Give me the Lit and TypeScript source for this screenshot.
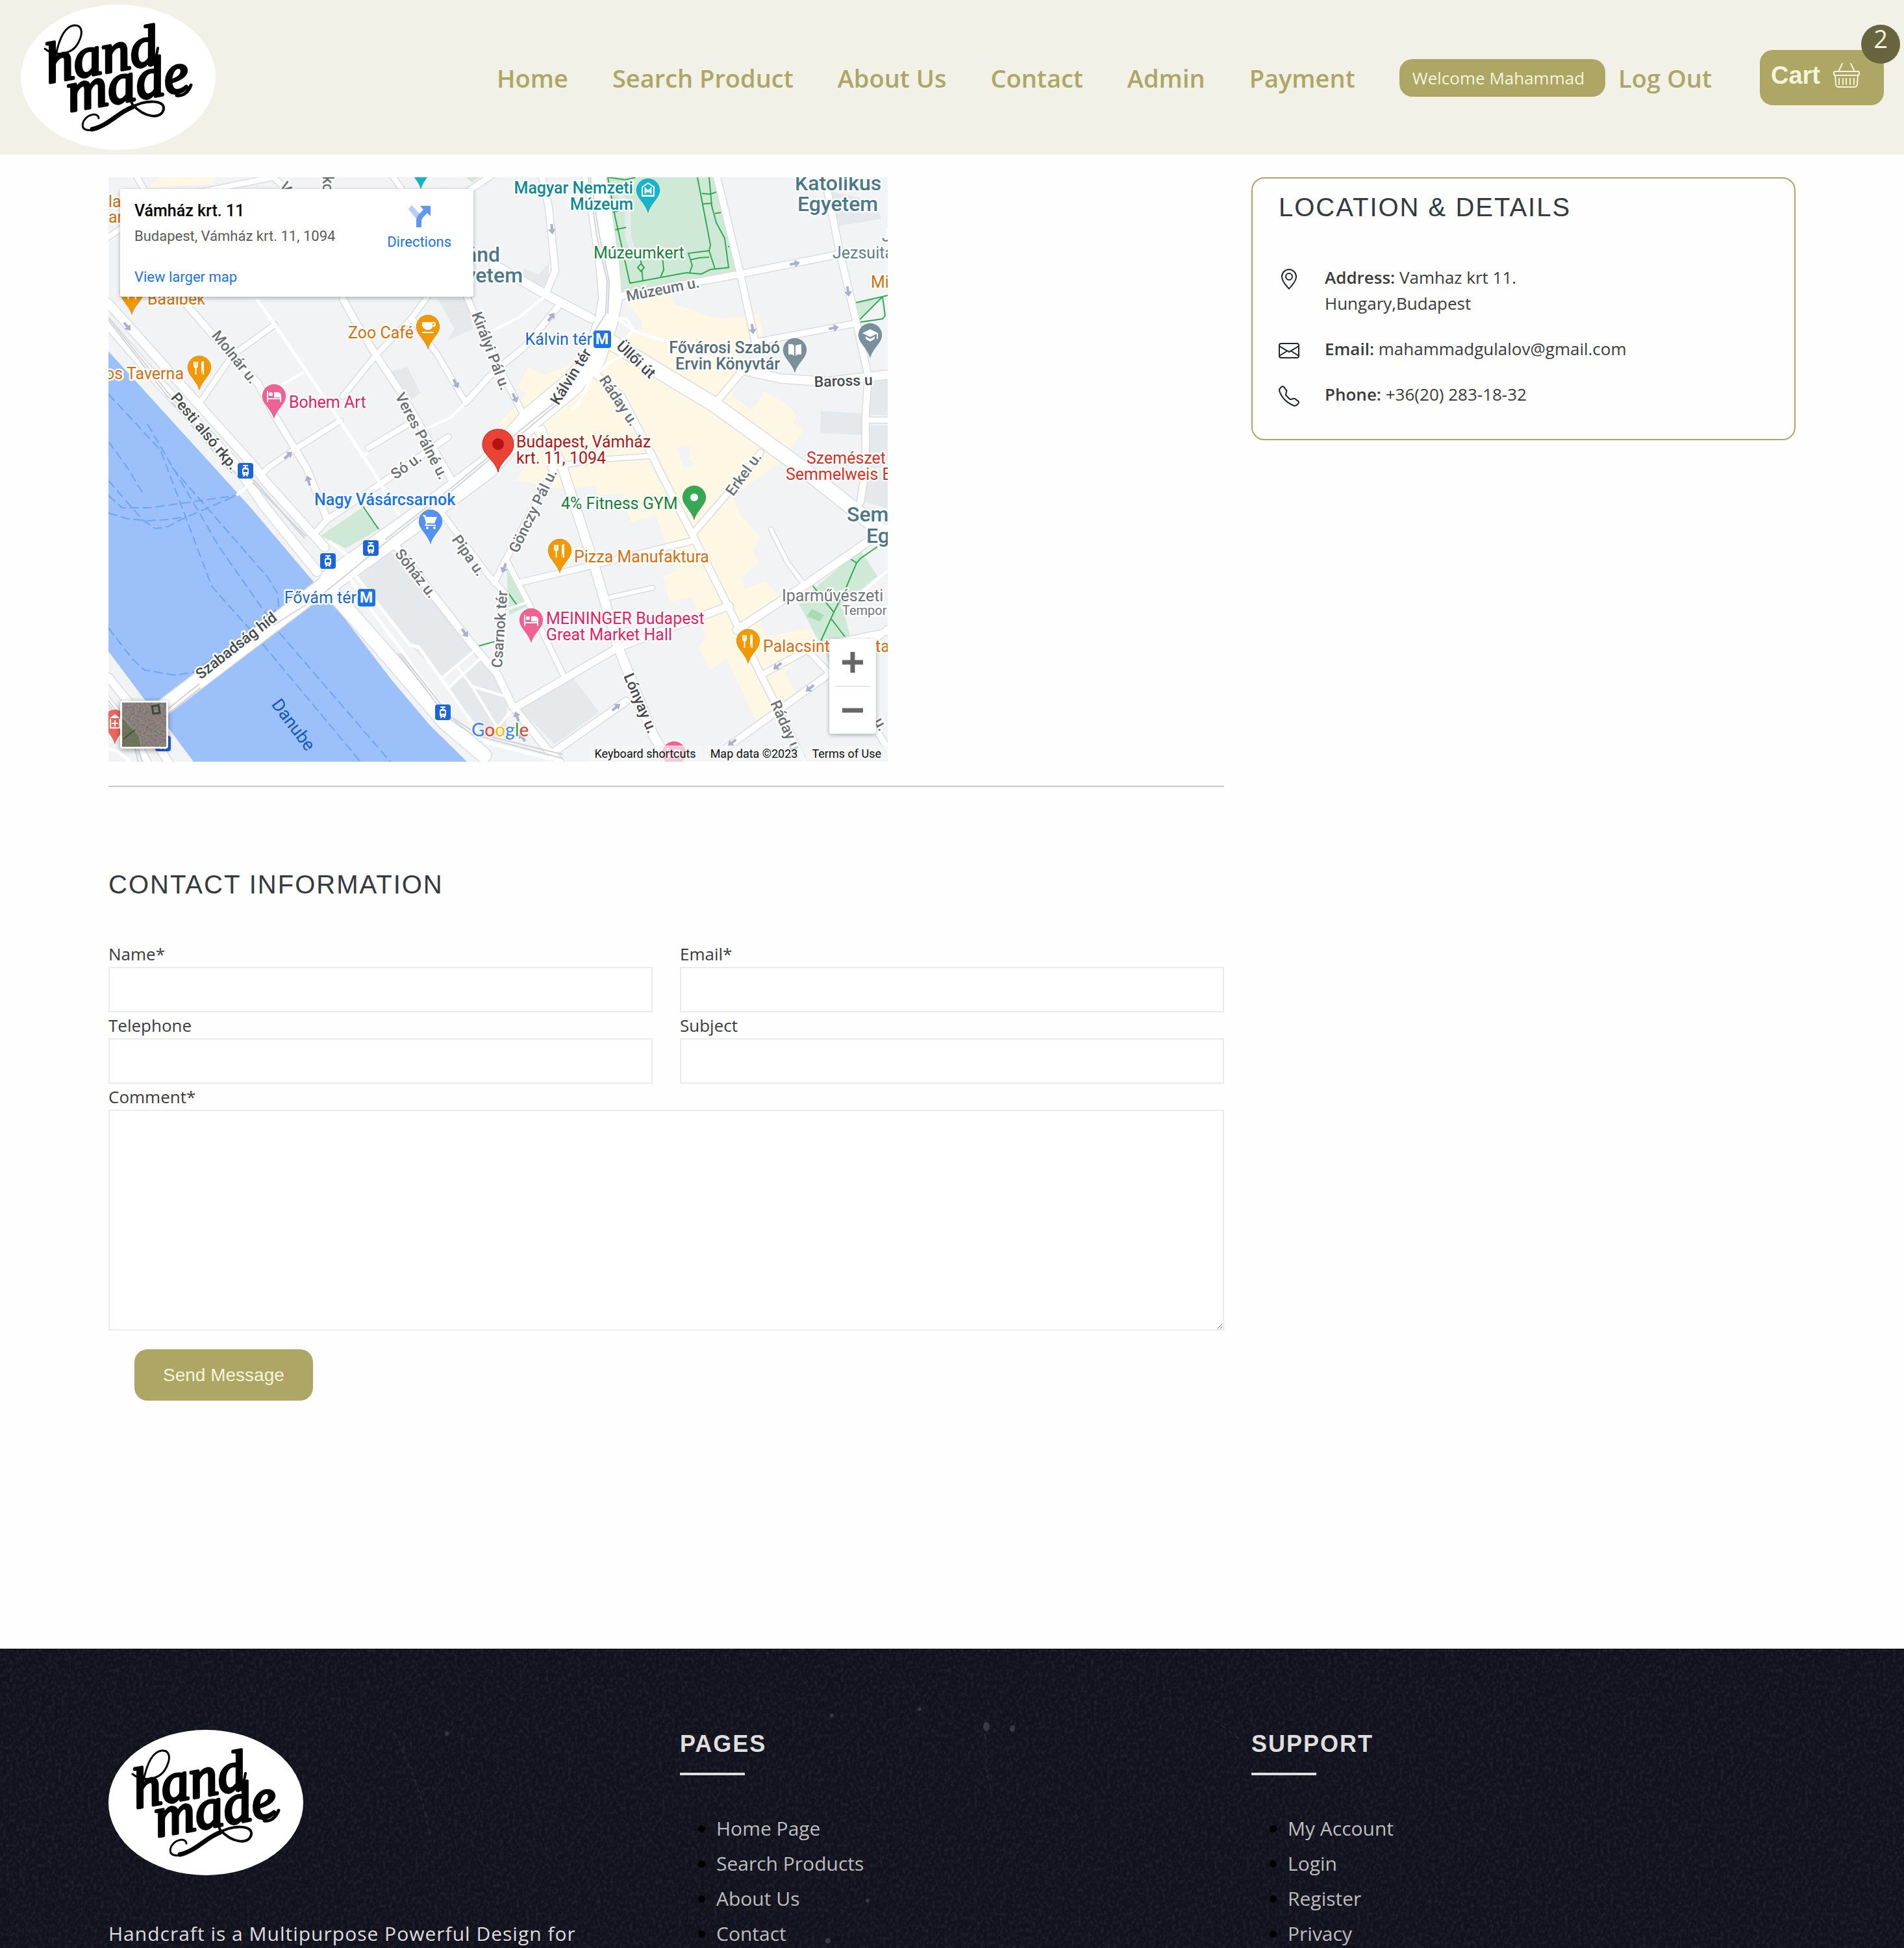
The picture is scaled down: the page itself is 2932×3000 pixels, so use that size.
import { LitElement, html, svg, css } from "lit";
import { customElement } from "lit/decorators.js";

type Label = [text: string, x: number, y: number, kind: string, angle?: number];
type Road = [points: string, width: number];

/* ---------- map data ---------- */

const ROADS: Road[] = [
  ["0,194 139,350 226,447 238,464 333,570", 13],
  ["0,227 72,310 191,437 220,477 238,504 321,607", 14],
  ["349,644 428,734 519,840 578,890", 22],
  ["0,770 40,820 92,900", 12],
  ["-6,800 26,840 60,900", 10],
  ["112,187 167,250 230,317 256,367 305,447 337,527", 10],
  ["256,227 191,274 139,350", 8],
  ["361,187 379,220 412,274 452,334 519,450 527,464", 10],
  ["491,184 467,217 412,274 361,337", 8],
  ["467,217 507,274 550,347", 8],
  ["467,377 400,417", 8],
  ["357,375 290,417 246,447 234,460", 8],
  ["321,545 337,527 412,477 523,400", 9],
  ["668,0 678,47 688,144 674,177", 10],
  ["692,200 640,262 593,300 550,347", 9],
  ["552,184 562,207 605,300 640,367", 9],
  ["440,564 503,647 566,727 598,764 622,814 675,880 695,900", 11],
  ["511,514 586,614 610,640 599,740 598,764", 8],
  ["668,387 687,447 613,587 594,624", 9],
  ["751,304 790,337 838,430 846,447 899,550 956,664 1005,767 1042,840 1070,900", 10],
  ["899,550 956,484 1004,424", 9],
  ["903,559 748,597 634,624", 9],
  ["956,660 785,724 626,817", 11],
  ["968,697 1079,624 1200,540", 12],
  ["613,590 646,654 699,764", 8],
  ["683,887 797,807", 11],
  ["1005,767 1083,724 1200,700", 9],
  ["1075,727 1111,764", 8],
  ["940,887 1111,764 1200,696", 10],
  ["1170,830 1200,880", 9],
  ["783,184 973,149 1123,119", 10],
  ["937,0 973,149 996,254", 10],
  ["1103,0 1127,119 1151,220 1170,307 1166,364 1166,447 1158,500", 10],
  ["996,254 1151,225", 9],
  ["977,297 1036,310 1107,315 1200,304", 13],
  ["977,297 933,350", 10],
  ["1174,374 1200,374", 8],
  ["1020,542 1046,594 1071,627", 6],
  ["838,632 773,647", 6],
  ["838,429 751,435 680,447", 7],
  ["44,0 58,24", 8],
  ["135,24 254,0", 8],
  ["254,0 280,24", 8],
  ["0,92 24,76", 8],
  ["550,24 598,-8", 9],
  ["436,-4 460,30", 8],
  ["593,134 676,182 743,217", 13],
  ["767,250 933,350 1067,447 1197,550", 22],
  ["664,392 696,437 748,597 785,724 838,857 862,900", 14],
  ["745,-13 755,37 769,137 773,187 767,220 747,280 712,320 652,370 582,447 460,537 343,620", 35],
  ["343,620 84,817", 24],
];

const LANES: Road[] = [
  ["672,184 630,217 586,239", 4],
  ["228,187 256,227 349,364 404,447 448,520", 5],
  ["550,347 527,370 483,390", 4],
  ["301,300 266,320", 4],
  ["783,217 810,237 862,254 977,297", 4],
  ["751,304 770,286 800,270", 4],
  ["733,330 748,300 722,352 712,358", 4],
  ["783,217 798,218 808,234 792,256", 4],
  ["400,424 388,430", 4],
  ["381,614 464,720 478,724 523,787", 5],
  ["373,618 385,640 448,724 523,830", 5],
  ["515,770 566,727", 4],
  ["523,787 574,740", 4],
  ["538,755 560,784 613,800", 4],
  ["560,784 600,850", 4],
  ["523,787 580,870 620,822", 4],
  ["580,870 700,900", 5],
  ["617,664 646,654", 4],
  ["197,490 214,476", 4],
  ["340,560 365,580 372,590", 4],
  ["1130,664 1200,606", 4],
  ["0,880 14,884 34,900", 5],
];

const RAILS = [
  "0,216 90,330 196,456",
  "0,220 88,334 190,456",
  "222,470 304,553",
  "224,466 302,556",
  "739,0 752,90 768,160 766,210 740,250",
  "742,0 756,90 771,160 769,210",
  "690,350 640,392 590,432 530,482 430,560 330,642 254,690",
  "686,348 636,388 586,430 526,480 426,558",
  "90,820 140,780",
  "92,826 142,786",
  "446,733 520,830 560,858 700,895",
  "450,733 526,830 566,856 700,889",
  "0,806 40,860 52,900",
  "0,812 36,862 46,900",
];

const YELLOW = [
  "795,187 866,180 870,195 901,204 909,210 941,217 973,215 1002,210 1008,244 980,254 973,294 961,337 992,359 1010,330 1044,349 1060,367 1054,377 1071,389 1040,435 960,490 973,520 1005,555 993,574 1001,594 973,617 981,634 1011,622 1032,644 1001,677 1013,707 1081,694 1089,710 1042,764 1058,794 997,837 952,740 926,759 909,724 919,710 911,680 899,647 864,654 854,614 875,607 842,520 805,532 791,487 752,490 750,475 700,480 628,467 656,420 600,380 629,350 644,334 629,324 646,292 672,304 743,277 780,260 806,240 820,240 822,224",
  "78,0 163,0 159,10 60,17",
];

const BLOCKS = [
  "432,574 566,727 515,770 464,720 381,614",
  "574,740 613,797 613,863 580,860 523,787",
  "715,770 756,824 687,873 632,817",
  "1097,360 1164,364 1164,397 1096,394",
  "1174,314 1200,310 1200,366 1172,366",
  "1174,382 1200,382 1200,447 1170,447",
  "1164,450 1200,450 1200,510 1164,500",
  "1113,22 1182,37 1190,64 1125,75",
  "507,187 550,187 562,234 521,252 533,234",
  "432,300 460,292 481,332 460,347",
  "640,140 662,150 678,132 678,160 662,174 636,158",
];

const PARKS = [
  "759,0 937,0 970,145 787,180",
  "327,552 390,509 416,542 365,572 355,566 341,560",
  "1062,654 1158,574 1184,614 1130,660 1144,714 1111,752 1100,720 1089,706",
  "613,604 646,660 617,674",
  "1147,194 1192,184 1152,224",
  "550,0 572,0 560,8",
];

const PATHS = [
  "769,0 780,60 803,163 890,147 913,149 927,142 955,139 949,94 936,70 929,44 925,0",
  "907,0 927,104 925,113 893,117 899,136 895,147",
  "925,113 934,141",
  "897,127 910,124 925,123",
  "914,25 927,26 941,21",
  "916,41 930,40",
  "934,56 949,53",
  "954,107 960,106",
  "774,54 786,52",
  "780,81 797,77",
  "769,0 796,4 812,0",
  "820,128 823,160",
  "853,120 855,143 850,154",
  "392,507 416,542",
  "1083,627 1117,670 1097,714",
  "1184,569 1158,587 1152,594 1135,634 1117,670",
  "1140,586 1152,594",
  "1113,680 1136,710",
  "614,638 630,660",
  "570,722 598,714",
  "1147,194 1200,182",
  "1192,184 1152,224 1192,218 1196,213 1192,184",
];

const FERRIES = [
  "0,334 80,420 159,630 230,710 388,900",
  "0,407 29,447 52,485",
  "60,380 171,570 262,700 434,900",
  "98,447 246,617 260,640 262,660 250,676",
  "0,467 52,527 72,541 92,538 112,527 197,490",
  "0,517 30,526 62,529 92,527 120,523",
  "0,490 21,509 64,509 197,490",
  "0,694 37,742 56,759 104,767 131,762 191,720 246,677",
];

const ARROWS: [number, number, number][] = [
  [29, 230, 50], [535, 318, 62], [277, 428, -40], [308, 467, -105], [683, 80, 86],
  [682, 215, -52], [626, 340, 66], [1057, 133, -10], [1139, 176, 82], [992, 234, 82],
  [1117, 232, -10], [549, 702, 54], [609, 602, 112], [629, 830, -110], [782, 816, -40],
  [1030, 753, 142], [1080, 787, 142], [960, 871, 142], [637, 862, -125],
];

const TRAMS: [number, number][] = [[199, 440], [326, 579], [392, 559], [503, 812], [72, 860]];
const METROS: [number, number][] = [[747, 236], [384, 634]];

const PINS: [x: number, top: number, color: string, icon: string][] = [
  [481, -35, "#12b5cb", "none"],
  [831, 2, "#12b5cb", "museum"],
  [492, 212, "#f29900", "cup"],
  [36, 159, "#f29900", "fork"],
  [140, 275, "#f29900", "fork"],
  [255, 319, "#f06292", "bed"],
  [496, 512, "#5491f5", "cart"],
  [902, 475, "#34a853", "dot"],
  [695, 557, "#f29900", "fork"],
  [651, 664, "#f06292", "bed"],
  [985, 696, "#f29900", "fork"],
  [1057, 248, "#78909c", "book"],
  [1173, 225, "#78909c", "cap"],
  [871, 869, "#f06292", "bed"],
  [10, 820, "#ee675c", "cross"],
];

const LABELS: Label[] = [
  ["Magyar Nemzeti", 808, 25, "teal end"],
  ["Múzeum", 808, 50, "teal end"],
  ["Múzeumkert", 747, 125, "green"],
  ["Kálvin tér", 745, 258, "blue end"],
  ["Fővám tér", 382, 656, "blue end"],
  ["Fővárosi Szabó", 1034, 271, "slate end"],
  ["Ervin Könyvtár", 1034, 296, "slate end"],
  ["Katolikus", 1057, 20, "campus"],
  ["Egyetem", 1061, 52, "campus"],
  ["lánd", 603, 130, "campus end"],
  ["Egyetem", 638, 162, "campus end"],
  ["Sem", 1137, 530, "campus"],
  ["Eg", 1167, 563, "campus"],
  ["Jezsuita", 1115, 125, "slate-light"],
  ["J", 1191, 99, "slate-light"],
  ["Mi", 1174, 170, "orange"],
  ["Szemészet", 1075, 441, "red"],
  ["Semmelweis E", 1043, 466, "red"],
  ["Budapest, Vámház", 628, 416, "dark-red"],
  ["krt. 11, 1094", 628, 441, "dark-red"],
  ["Zoo Café", 470, 248, "orange end"],
  ["Bohem Art", 278, 355, "pink"],
  ["os Taverna", 116, 311, "orange end"],
  ["Baalbek", 60, 196, "orange"],
  ["la", 0, 46, "orange"],
  ["an", 0, 70, "orange"],
  ["Nagy Vásárcsarnok", 317, 505, "bright"],
  ["4% Fitness GYM", 697, 511, "green"],
  ["Pizza Manufaktura", 717, 593, "orange"],
  ["MEININGER Budapest", 674, 688, "pink"],
  ["Great Market Hall", 674, 713, "pink"],
  ["Iparművészeti", 1037, 653, "gray"],
  ["Tempor", 1130, 674, "gray small"],
  ["Palacsint", 1008, 731, "orange"],
  ["ta", 1181, 731, "orange"],
  ["Múzeum u.", 799, 191, "street", -11],
  ["Üllői út", 781, 262, "main", 43],
  ["Ráday u.", 755, 312, "street", 56],
  ["Kálvin tér", 693, 352, "main", -58],
  ["Baross u", 1087, 323, "main", -2],
  ["Molnár u.", 158, 244, "street", 51],
  ["Pesti alsó rkp.", 95, 340, "main", 50],
  ["Veres Pálné u.", 441, 337, "street", 62],
  ["Királyi Pál u.", 559, 211, "street", 69],
  ["Só u.", 442, 466, "street", -36],
  ["Pipa u.", 528, 558, "street", 55],
  ["Sóház u.", 440, 580, "street", 52],
  ["Csarnok tér", 606, 756, "street", -86],
  ["Gönczy Pál u.", 630, 580, "street", -64],
  ["Erkel u.", 962, 492, "street", -54],
  ["Lónyay u.", 793, 768, "main", 67],
  ["Ráday u.", 1019, 810, "street", 66],
  ["u.", 1178, 838, "street", 60],
  ["Szabadság híd", 142, 774, "main", -38],
  ["V", 262, 14, "street", 55],
  ["kc", 330, -2, "street", 90],
  ["Danube", 250, 812, "river", 53],
];

const pinIcon = (kind: string) => {
  switch (kind) {
    case "fork":
      return svg`<path fill="none" stroke="#fff" stroke-width="2" d="M-8-9v6q0 3 2.500 3t2.500-3v-6M-5.500-9v20"/><path fill="#fff" d="M3 11V-7q0-3 4-3v21h-2V3z"/>`;
    case "bed":
      return svg`<path fill="#fff" d="M-11-8h2V3h18v-4h2v10h-2V5H-9v4h-2z"/><circle cx="-5" cy="-3" r="3" fill="#fff"/><path fill="#fff" d="M0-6h5q6 0 6 6v2H0z"/>`;
    case "cup":
      return svg`<path fill="#fff" d="M-9-7H10q2 0 2 4t-5 3Q6 5 0 5t-9-6zM7-5v3q3 0 3-3zM-9 8H9v2H-9z"/>`;
    case "cart":
      return svg`<path fill="#fff" d="M-12-10h4l1 3H10L6 3H-5l-1 2H8v2H-9l2-5-3-10h-2z"/><circle cx="-5" cy="10" r="2" fill="#fff"/><circle cx="6" cy="10" r="2" fill="#fff"/>`;
    case "book":
      return svg`<path fill="#fff" d="M-10-9q6-1 9 2V9q-3-3-9-2zM10-9Q4-8 1-7V9q3-3 9-2z"/>`;
    case "cap":
      return svg`<path fill="#fff" d="M0-9l12 6v9h-2v-8L0 3l-12-6zM-7 2l7 4 7-4v4L0 10l-7-4z"/>`;
    case "museum":
      return svg`<path fill="none" stroke="#fff" stroke-width="2" d="M-9-5L0-11 9-5v13H-9zM-10 9H10"/><path fill="none" stroke="#fff" stroke-width="3" d="M-4 5v-7L0 2l4-4v7"/>`;
    case "cross":
      return svg`<path fill="none" stroke="#fff" stroke-width="2" d="M-7-4v14H7V-4M0-2v10M-5 3H5"/><path fill="#fff" d="M0-11l8 6H-8z"/>`;
    case "dot":
      return svg`<circle r="6" fill="#fff"/>`;
    default:
      return svg``;
  }
};

/* ---------- shared lettering mark ---------- */

@customElement("brand-mark")
class BrandMark extends LitElement {
  static styles = css`
    :host { display: block; width: 300px; }
    .mark { display: block; width: 100%; height: auto; }
    .word { font: italic 400 88px "Liberation Serif", serif; fill: #000; stroke: #000; stroke-width: 4; stroke-linejoin: round; }
    .swash { fill: none; stroke: #000; stroke-linecap: round; stroke-linejoin: round; }
  `;
  render() {
    return html`<svg class="mark" viewBox="0 0 300 225" role="img" aria-label="hand made">
      <ellipse cx="150" cy="112" rx="150" ry="112" fill="#fff" />
      <text class="word" transform="translate(42 121) rotate(-10)">hand</text>
      <text class="word" transform="translate(75 165) rotate(-10)">made</text>
      <path class="swash" stroke-width="3" d="M37 68C50 79 78 80 89 58C98 40 92 31 82 32C66 34 58 58 54 78" />
      <path class="swash" stroke-width="3" d="M120 175C119 166 104 168 97 179C92 190 98 195 110 193" />
      <path class="swash" stroke-width="7" d="M110 192C134 187 150 166 172 158" />
      <path class="swash" stroke-width="4" d="M168 160C190 146 222 146 220 161C216 178 190 174 172 154L166 140" />
      <path class="swash" stroke-width="4" d="M200 94C206 90 209 80 211 67" />
      <path class="swash" stroke-width="5" d="M240 140C252 142 259 132 262 124" />
    </svg>`;
  }
}

/* ---------- map ---------- */

@customElement("city-map")
class CityMap extends LitElement {
  static styles = css`
    :host { display: block; position: relative; max-width: 1200px; overflow: hidden; font-family: Roboto, sans-serif; }
    * { box-sizing: border-box; }
    .canvas { display: block; width: 100%; height: auto; background: #f1f3f4; }
    text { font-size: 25px; paint-order: stroke; stroke: #fff; stroke-width: 5; stroke-linejoin: round; }
    .end { text-anchor: end; }
    .teal { fill: #0c8a94; font-weight: 500; }
    .green { fill: #188038; }
    .blue { fill: #1967d2; }
    .bright { fill: #1a73e8; font-weight: 500; }
    .slate { fill: #546e7a; font-weight: 500; }
    .slate-light { fill: #607d8b; }
    .campus { fill: #4a7888; font-size: 32px; font-weight: 500; }
    .orange { fill: #d56e0c; }
    .red { fill: #d93025; }
    .dark-red { fill: #b31412; }
    .pink { fill: #e91e63; }
    .gray { fill: #70757a; }
    .small { font-size: 20px; }
    .street { fill: #6b7075; font-size: 23px; font-weight: 500; }
    .main { fill: #45494d; font-size: 23px; font-weight: 500; }
    .river { fill: #1558b8; font-size: 27px; stroke: none; }
    .metro { fill: #fff; font-size: 23px; font-weight: 700; text-anchor: middle; stroke: none; }
    .google { font: 500 28px Lato, sans-serif; stroke-width: 3; }
    .info {
      position: absolute; top: 18px; left: 18px; width: 544px; padding: 18px 34px 14px 22px;
      display: grid; grid-template-columns: 1fr auto;
      background: #fff; border-radius: 3px; box-shadow: 0 2px 6px rgba(0, 0, 0, .3);
    }
    .place { margin: 0; font-size: 25px; line-height: 32px; font-weight: 500; color: #000; }
    .address { margin: 7px 0 0; font-size: 22px; line-height: 32px; color: #5b5b5b; }
    a { color: #1a73e8; text-decoration: none; font-size: 22px; line-height: 32px; }
    .directions { display: flex; flex-direction: column; align-items: center; gap: 7px; padding-top: 7px; }
    .larger { margin-top: 22px; }
    .zoom {
      position: absolute; right: 18px; bottom: 43px; width: 72px; display: flex; flex-direction: column;
      align-items: center; background: #fff; border-radius: 4px; box-shadow: 0 2px 6px rgba(0, 0, 0, .3);
    }
    .zoom button { width: 72px; height: 72px; padding: 0; border: 0; background: none; display: grid; place-items: center; }
    .zoom .rule { width: 54px; height: 2px; background: #e6e6e6; }
    .satellite {
      position: absolute; left: 18px; bottom: 20px; width: 74px; height: 74px; padding: 0; border: 3px solid #fff;
      border-radius: 4px; background: #6d655d; box-shadow: 0 2px 8px rgba(0, 0, 0, .4); overflow: hidden;
    }
    .satellite svg { display: block; }
    .credits { position: absolute; right: 0; bottom: 0; display: flex; gap: 2px; }
    .credits > * { padding: 0 10px; background: rgba(245, 245, 245, .7); color: #111; font: 18px/25px Roboto, sans-serif; border: 0; }
  `;

  render() {
    return html`
      <svg class="canvas" viewBox="0 0 1200 900" role="img" aria-label="Map of Vámház krt. 11, Budapest">
        ${YELLOW.map((p) => svg`<polygon points=${p} fill="#fef7e3" />`)}
        <polygon points="874,417 895,414 893,434 905,444 886,447" fill="#f1f3f4" />
        ${BLOCKS.map((p) => svg`<polygon points=${p} fill="#e6e9ec" />`)}
        ${PARKS.map((p) => svg`<polygon points=${p} fill="#ceead6" />`)}
        <polygon points="1083,665 1102,674 1095,684 1075,676" fill="#a8dab5" />
        <polygon
          points="0,268 163,447 220,510 315,622 349,660 436,774 495,844 552,900 131,900 90,845 56,805 0,730"
          fill="#9cc0f9" />
        ${FERRIES.map((p) => svg`<polyline points=${p} fill="none" stroke="#6fa3f5" stroke-width="2" stroke-dasharray="14 6" />`)}
        <polyline points="785,20 800,50 800,90 806,110 795,128" fill="none" stroke="#e8eaed" stroke-width="9" />
        ${PATHS.map((p) => svg`<polyline points=${p} fill="none" stroke="#34a853" stroke-width="2" />`)}
        <path d="M820 133l5 6-5 6-5-6z" fill="#ceead6" stroke="#34a853" stroke-width="2" />
        ${ROADS.map(([p, w]) => svg`<polyline points=${p} fill="none" stroke="#dadce0" stroke-width=${w + 3} stroke-linejoin="round" stroke-linecap="round" />`)}
        ${LANES.map(([p, w]) => svg`<polyline points=${p} fill="none" stroke="#fff" stroke-width=${w} stroke-linejoin="round" />`)}
        ${ROADS.map(([p, w]) => svg`<polyline points=${p} fill="none" stroke="#fff" stroke-width=${w} stroke-linejoin="round" stroke-linecap="round" />`)}
        ${RAILS.map((p) => svg`<polyline points=${p} fill="none" stroke="#d0d3d7" stroke-width="2" />`)}
        ${ARROWS.map(([x, y, a]) => svg`<path transform="translate(${x} ${y}) rotate(${a})" d="M-8-2h8v-4l8 6-8 6v-4h-8z" fill="#aab0cf" />`)}
        ${TRAMS.map(([x, y]) => svg`<g transform="translate(${x} ${y})">
          <rect width="24" height="24" rx="4" fill="#1a66d6" />
          <path d="M8 4h8M12 4v4" stroke="#fff" stroke-width="2" />
          <path fill-rule="evenodd" fill="#fff" d="M9 7h6l2 2v8l-2 2 1 2h-2l-1-2h-2l-1 2H8l1-2-2-2V9zM9 10v4h6v-4zM11 16v1h2v-1z" />
        </g>`)}
        ${METROS.map(([x, y]) => svg`<g transform="translate(${x} ${y})">
          <rect width="27" height="27" rx="4" fill="#1a73e8" /><text class="metro" x="13" y="21">M</text>
        </g>`)}
        ${PINS.map(([x, top, color, icon]) => svg`<g transform="translate(${x} ${top + 18})">
          <path d="M0-18C10-18 18-10 18 0C18 12 4 20 0 35C-4 20-18 12-18 0C-18-10-10-18 0-18z" fill=${color} stroke="rgba(0,0,0,.12)" />
          ${pinIcon(icon)}
        </g>`)}
        ${LABELS.map(([t, x, y, kind, a]) => svg`<text class=${kind} transform="translate(${x} ${y}) rotate(${a ?? 0})">${t}</text>`)}
        <path d="M600 388C614 388 624 398 624 412C624 428 604 436 600 454C596 436 576 428 576 412C576 398 586 388 600 388z" fill="#ea4335" stroke="#b9271c" />
        <circle cx="600" cy="411" r="9" fill="#b31412" />
        <text class="google" x="559" y="861"><tspan fill="#4285f4">G</tspan><tspan fill="#ea4335">o</tspan><tspan fill="#fbbc04">o</tspan><tspan fill="#4285f4">g</tspan><tspan fill="#34a853">l</tspan><tspan fill="#ea4335">e</tspan></text>
      </svg>

      <section class="info">
        <div>
          <h2 class="place">Vámház krt. 11</h2>
          <p class="address">Budapest, Vámház krt. 11, 1094</p>
        </div>
        <a class="directions" href="#directions">
          <svg width="34" height="34" viewBox="0 0 34 34" aria-hidden="true">
            <path d="M0 6l5-6 12 13-5 8z" fill="#b7cefc" />
            <path d="M12 34V24q0-6 5-11l6-6-5-6h16v16l-5-5-6 6q-3 3-3 7v9z" fill="#6394f9" />
          </svg>
          Directions
        </a>
        <a class="larger" href="#map">View larger map</a>
      </section>

      <button class="satellite" aria-label="Satellite view">
        <svg width="68" height="68" viewBox="0 0 68 68" aria-hidden="true">
          <filter id="grain"><feTurbulence type="fractalNoise" baseFrequency=".3" numOctaves="3" seed="4" />
            <feColorMatrix values="1 0 0 0 -.05 0 .8 0 0 0 0 0 .8 0 0 0 0 0 0 .5" /></filter>
          <rect width="68" height="68" fill="#5f544d" />
          <rect width="68" height="68" filter="url(#grain)" />
          <path d="M0 22L26 50 30 68H0z" fill="#66724f" fill-opacity=".8" />
          <path d="M0 22L26 50 30 68" fill="none" stroke="#8d8f86" stroke-width="2" />
          <path d="M46 6l10-2 2 12-10 1z" fill="none" stroke="#3d4a3d" stroke-width="3" />
          <path d="M2 56L20 42" stroke="#44503e" stroke-width="2" />
        </svg>
      </button>

      <div class="zoom">
        <button aria-label="Zoom in"><svg width="32" height="32" aria-hidden="true"><path d="M0 16h32M16 0v32" stroke="#666" stroke-width="7" /></svg></button>
        <span class="rule"></span>
        <button aria-label="Zoom out"><svg width="32" height="8" aria-hidden="true"><path d="M0 4h32" stroke="#666" stroke-width="7" /></svg></button>
      </div>

      <div class="credits">
        <button>Keyboard shortcuts</button>
        <span>Map data ©2023</span>
        <a href="#terms">Terms of Use</a>
      </div>
    `;
  }
}

/* ---------- page ---------- */

const NAV = ["Home", "Search Product", "About Us", "Contact", "Admin", "Payment"];
const FOOTER_LISTS = [
  { title: "Pages", items: ["Home Page", "Search Products", "About Us", "Contact"] },
  { title: "Support", items: ["My Account", "Login", "Register", "Privacy"] },
];
const FIELDS = [
  { id: "name", label: "Name*", type: "text" },
  { id: "email", label: "Email*", type: "email" },
  { id: "telephone", label: "Telephone", type: "tel" },
  { id: "subject", label: "Subject", type: "text" },
];

@customElement("app-root")
class AppRoot extends LitElement {
  static styles = css`
    :host { display: block; background: #fefefe; color: #3b3b3b; font: 26px/40px "Open Sans", sans-serif; }
    * { box-sizing: border-box; }
    h2, h3, p, ul { margin: 0; padding: 0; }
    a { color: inherit; text-decoration: none; }

    .header { display: flex; align-items: center; justify-content: space-between; padding: 7px 31px 6px 32px; background: #f1f1e7; }
    .actions { display: flex; align-items: center; gap: 74px; }
    .nav { display: flex; align-items: center; gap: 68px; font-size: 38px; line-height: 50px; font-weight: 600; color: #aea664; }
    .account { display: flex; align-items: center; gap: 20px; }
    .welcome { padding: 8px 32px 8px 20px; border-radius: 20px; background: #aea664; color: #f5f5dc; font-size: 26px; line-height: 42px; font-weight: 400; }
    .cart { position: relative; display: flex; align-items: center; gap: 20px; height: 85px; padding: 0 37px 8px 17px; border: 0; border-radius: 20px; background: #aea664; color: #f5f5dc; font: 700 38px/44px "Liberation Sans", sans-serif; }
    .badge { position: absolute; top: -39px; right: -25px; width: 60px; height: 60px; border-radius: 50%; background: #696440; text-align: center; font: 400 38px/42px "Open Sans", sans-serif; }

    .container { max-width: 2640px; margin: 0 auto; padding: 0 21px; display: grid; grid-template-columns: repeat(3, minmax(0, 1fr)); gap: 42px; align-items: start; }
    .main { padding-top: 35px; padding-bottom: 382px; }
    .primary { grid-column: span 2; }
    .divider { height: 2px; margin: 37px 0 126px; border: 0; background: #c6c6c6; }
    .title { font: 400 40px/48px "Liberation Sans", sans-serif; letter-spacing: 2px; text-transform: uppercase; color: #343a40; }
    .form { display: grid; grid-template-columns: 1fr 1fr; column-gap: 42px; margin-top: 63px; }
    .field { display: flex; flex-direction: column; }
    .wide { grid-column: 1 / -1; }
    .field input, .field textarea { width: 100%; padding: 10px 20px; border: 2px solid #ebebeb; border-radius: 0; background: #fff; font: inherit; color: inherit; outline: 0; }
    .field input { height: 70px; }
    .field textarea { height: 340px; display: block; }
    .send { justify-self: start; margin: 29px 0 0 40px; padding: 0 44px; height: 79px; border: 0; border-radius: 20px; background: #aea664; color: #f5f5dc; font: 400 28px/40px "Liberation Sans", sans-serif; }

    .card { padding: 20px 40px 49px; border: 2px solid #aea664; border-radius: 20px; }
    .details { list-style: none; margin-top: 64px; display: flex; flex-direction: column; gap: 30px; }
    .details li { display: flex; gap: 39px; }
    .details svg { flex: none; margin-top: 7px; fill: #212529; }
    .details b { font-weight: 600; }

    .footer { position: relative; padding-top: 125px; background: #12121f; color: #dedede; overflow: hidden; }
    .texture { position: absolute; inset: 0; width: 100%; height: 100%; }
    .footer .container { position: relative; }
    .tagline { margin-top: 66px; font-size: 30px; line-height: 45px; letter-spacing: 1px; }
    .heading { font: 700 36px/44px "Liberation Sans", sans-serif; letter-spacing: 2px; text-transform: uppercase; color: #dedede; }
    .heading::after { content: ""; display: block; width: 100px; height: 4px; margin-top: 22px; background: #dedede; }
    .links { margin-top: 55px; padding-left: 56px; font-size: 30px; line-height: 54px; color: #bdbdbd; }
    .links li::marker { color: #000; }
  `;

  render() {
    return html`
      <header class="header">
        <a href="#home"><brand-mark></brand-mark></a>
        <div class="actions">
          <nav class="nav">
            ${NAV.map((item) => html`<a href="#">${item}</a>`)}
            <div class="account">
              <a class="welcome" href="#profile">Welcome Mahammad</a>
              <a href="#logout">Log Out</a>
            </div>
          </nav>
          <button class="cart">
            Cart
            <svg width="41" height="38" viewBox="0 0 41 38" fill="none" stroke="#f5f5dc" stroke-width="2" stroke-linecap="round" aria-hidden="true">
              <path d="M14 1L8 13M27 1l6 12" />
              <rect x="1" y="13" width="39" height="6" rx="2" />
              <path d="M3 19l1 14q1 4 4 4h25q3 0 4-4l1-14" />
              <path d="M9 24v9M15 24v9M20 24v9M26 24v9M32 24v9" />
            </svg>
            <span class="badge">2</span>
          </button>
        </div>
      </header>

      <main class="container main">
        <div class="primary">
          <city-map></city-map>
          <hr class="divider" />
          <h2 class="title">Contact Information</h2>
          <form class="form" @submit=${(e: Event) => e.preventDefault()}>
            ${FIELDS.map((f) => html`
              <div class="field">
                <label for=${f.id}>${f.label}</label>
                <input id=${f.id} type=${f.type} />
              </div>`)}
            <div class="field wide">
              <label for="comment">Comment*</label>
              <textarea id="comment"></textarea>
            </div>
            <button class="send">Send Message</button>
          </form>
        </div>

        <aside class="card">
          <h2 class="title">Location &amp; Details</h2>
          <ul class="details">
            <li>
              <svg width="32" height="32" viewBox="0 0 16 16" aria-hidden="true"><path d="M12.166 8.940c-.524 1.062-1.234 2.120-1.960 3.070A31.493 31.493 0 0 1 8 14.580a31.481 31.481 0 0 1-2.206-2.570c-.726-.950-1.436-2.008-1.960-3.070C3.304 7.867 3 6.862 3 6a5 5 0 0 1 10 0c0 .862-.305 1.867-.834 2.940zM8 16s6-5.686 6-10A6 6 0 0 0 2 6c0 4.314 6 10 6 10z" /><path d="M8 8a2 2 0 1 1 0-4 2 2 0 0 1 0 4zm0 1a3 3 0 1 0 0-6 3 3 0 0 0 0 6z" /></svg>
              <span><b>Address:</b> Vamhaz krt 11.<br />Hungary,Budapest</span>
            </li>
            <li>
              <svg width="32" height="32" viewBox="0 0 16 16" aria-hidden="true"><path d="M0 4a2 2 0 0 1 2-2h12a2 2 0 0 1 2 2v8a2 2 0 0 1-2 2H2a2 2 0 0 1-2-2V4zm2-1a1 1 0 0 0-1 1v.217l7 4.200 7-4.200V4a1 1 0 0 0-1-1H2zm13 2.383-4.708 2.825L15 11.105V5.383zm-.034 6.876-5.640-3.471L8 9.583l-1.326-.795-5.640 3.470A1 1 0 0 0 2 13h12a1 1 0 0 0 .966-.741zM1 11.105l4.708-2.897L1 5.383v5.722z" /></svg>
              <span><b>Email:</b> mahammadgulalov@gmail.com</span>
            </li>
            <li>
              <svg width="32" height="32" viewBox="0 0 16 16" aria-hidden="true"><path d="M3.654 1.328a.678.678 0 0 0-1.015-.063L1.605 2.300c-.483.484-.661 1.169-.450 1.770a17.568 17.568 0 0 0 4.168 6.608 17.569 17.569 0 0 0 6.608 4.168c.601.211 1.286.033 1.770-.450l1.034-1.034a.678.678 0 0 0-.063-1.015l-2.307-1.794a.678.678 0 0 0-.580-.122l-2.190.547a1.745 1.745 0 0 1-1.657-.459L5.482 8.062a1.745 1.745 0 0 1-.460-1.657l.548-2.190a.678.678 0 0 0-.122-.580L3.654 1.328zM1.884.511a1.745 1.745 0 0 1 2.612.163L6.290 2.980c.329.423.445.974.315 1.494l-.547 2.190a.678.678 0 0 0 .178.643l2.457 2.457a.678.678 0 0 0 .644.178l2.189-.547a1.745 1.745 0 0 1 1.494.315l2.306 1.794c.829.645.905 1.870.163 2.611l-1.034 1.034c-.740.740-1.846 1.065-2.877.702a18.634 18.634 0 0 1-7.010-4.420 18.634 18.634 0 0 1-4.420-7.009c-.362-1.030-.037-2.137.703-2.877L1.885.511z" /></svg>
              <span><b>Phone:</b> +36(20) 283-18-32</span>
            </li>
          </ul>
        </aside>
      </main>

      <footer class="footer">
        <svg class="texture" aria-hidden="true">
          <filter id="dust" x="0" y="0" width="100%" height="100%">
            <feTurbulence type="fractalNoise" baseFrequency=".2 .16" numOctaves="3" seed="9" />
            <feColorMatrix values="0 0 0 0 .6  0 0 0 0 .6  0 0 0 0 .6  .2 0 0 0 -.085" />
          </filter>
          <rect width="100%" height="100%" filter="url(#dust)" />
          <g fill="#8a8a96" opacity=".3">
            <ellipse cx="1519" cy="120" rx="5" ry="7" /><ellipse cx="1559" cy="123" rx="4" ry="5" />
            <circle cx="688" cy="131" r="3" /><circle cx="1416" cy="93" r="3" /><circle cx="1281" cy="103" r="3" />
            <circle cx="1275" cy="450" r="4" /><circle cx="1336" cy="388" r="3" />
          </g>
          <path d="M1517 130l2 55 8 38M608 130l26 60 16 45 12 50M1870 110l40 30" fill="none" stroke="#8a8a96" stroke-opacity=".15" stroke-width="2" stroke-dasharray="8 5" />
        </svg>
        <div class="container">
          <div>
            <brand-mark></brand-mark>
            <p class="tagline">Handcraft is a Multipurpose Powerful Design for</p>
          </div>
          ${FOOTER_LISTS.map((list) => html`
            <div>
              <h3 class="heading">${list.title}</h3>
              <ul class="links">
                ${list.items.map((item) => html`<li><a href="#">${item}</a></li>`)}
              </ul>
            </div>`)}
        </div>
      </footer>
    `;
  }
}
